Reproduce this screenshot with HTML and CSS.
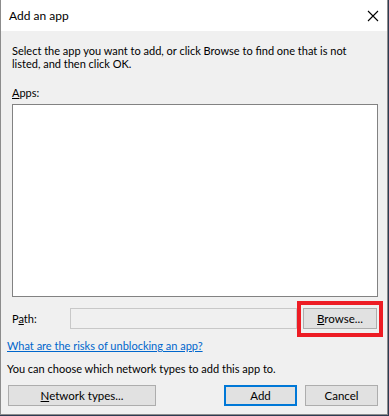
FILE: index.html
```html
<!DOCTYPE html>
<html lang="en">
<head>
  <meta charset="UTF-8">
  <meta name="viewport" content="width=device-width, initial-scale=1.0">
  <title>Add an app</title>
  <link rel="stylesheet" href="styles.css">
</head>
<body>
  <div class="window">
    <!-- Title bar -->
    <div class="titlebar">
      <span class="title">Add an app</span>
      <svg class="close" width="12" height="12" viewBox="0 0 12 12">
        <path d="M1 1 L11 11 M11 1 L1 11" stroke="#000" stroke-width="1.1" fill="none"/>
      </svg>
    </div>

    <div class="content">
      <p class="intro">Select the app you want to add, or click Browse to find one that is not<br>listed, and then click OK.</p>

      <div class="label apps-label"><u>A</u>pps:</div>
      <div class="listbox"></div>

      <!-- Path row -->
      <div class="path-row">
        <span class="label">P<u>a</u>th:</span>
        <div class="path-input"></div>
        <span class="browse-wrap">
          <button class="btn browse-btn"><u>B</u>rowse...</button>
        </span>
      </div>

      <a href="#" class="link">What are the risks of unblocking an app?</a>
      <p class="note">You can choose which network types to add this app to.</p>

      <!-- Bottom buttons -->
      <div class="button-row">
        <button class="btn network-btn"><u>N</u>etwork types...</button>
        <div class="right-buttons">
          <button class="btn default-btn">Add</button>
          <button class="btn">Cancel</button>
        </div>
      </div>
    </div>
  </div>
</body>
</html>
```

FILE: styles.css
```css
html, body {
  margin: 0;
  padding: 0;
  background: #2e3b52;
}

body {
  font-family: Lato, "Noto Sans", sans-serif;
  font-size: 11px;
  color: #000;
}

.window {
  width: 388px;
  height: 415px;
  box-sizing: border-box;
  border: 1px solid #8c8c8c;
  border-top: none;
  background: #f0f0f0;
  display: flex;
  flex-direction: column;
}

.titlebar {
  height: 31px;
  flex: none;
  background: #fff;
  display: flex;
  align-items: center;
  justify-content: space-between;
  padding: 0 8px 0 8px;
}

.title {
  font-size: 12px;
}

.close {
  display: block;
  margin-top: 1px;
}

.content {
  padding: 13px 9px 0 6px;
}

.intro {
  margin: 0 0 0 5px;
  line-height: 13px;
  white-space: nowrap;
}

.label {
  line-height: 14px;
}

.apps-label {
  margin: 16px 0 4px 5px;
}

.listbox {
  margin-left: 5px;
  height: 191px;
  background: #fff;
  border: 1px solid #828282;
}

.path-row {
  display: flex;
  align-items: center;
  margin: 11px 0 0 5px;
  height: 21px;
}

.path-row .label {
  width: 58px;
}

.path-input {
  width: 225px;
  height: 19px;
  border: 1px solid #c8c8c8;
  background: #f0f0f0;
}

.browse-wrap {
  position: relative;
  margin-left: 6px;
  display: flex;
}

/* red highlight frame drawn over the button */
.browse-wrap::after {
  content: "";
  position: absolute;
  left: -6px;
  right: -6px;
  top: -7px;
  bottom: -8px;
  border: 4px solid #ed1c24;
}

.btn {
  font-family: inherit;
  font-size: 11.5px;
  color: #000;
  background: #e1e1e1;
  border: 1px solid #adadad;
  height: 21px;
  width: 73px;
  padding: 0;
  line-height: 18px;
}

.browse-btn {
  width: 74px;
}

.link {
  display: inline-block;
  margin-top: 10px;
  color: #0066cc;
  text-decoration: underline;
  line-height: 14px;
}

.note {
  margin: 9px 0 0 0;
  line-height: 14px;
}

.button-row {
  display: flex;
  justify-content: space-between;
  margin: 9px 0 0 1px;
}

.network-btn {
  width: 148px;
}

.right-buttons {
  display: flex;
  gap: 8px;
}

.default-btn {
  border: 2px solid #0078d7;
}
```
